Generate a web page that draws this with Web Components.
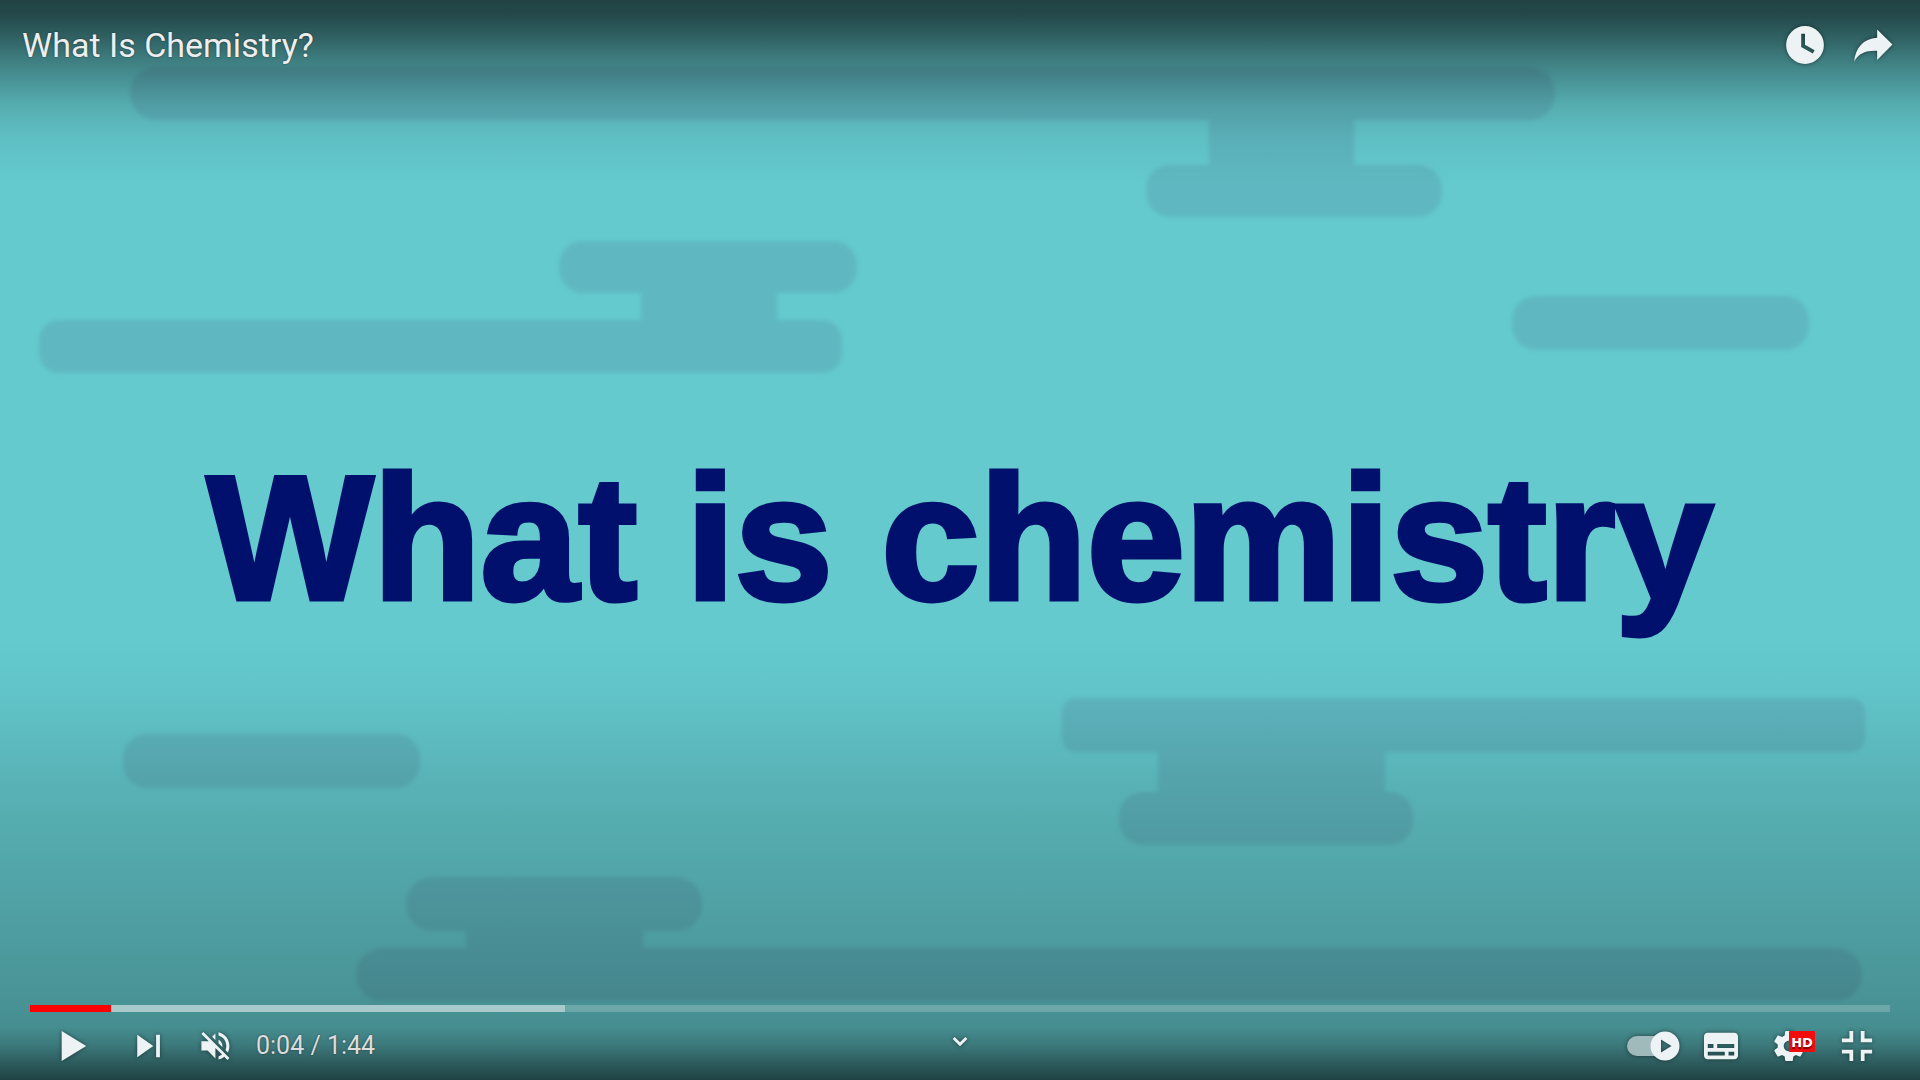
<!DOCTYPE html>
<html lang="en">
<head>
<meta charset="utf-8">
<title>What Is Chemistry?</title>
<style>
  body { margin: 0; font-family: Roboto, "Liberation Sans", sans-serif; background: #64cace; }
</style>
</head>
<body>
<video-player heading="What Is Chemistry?"></video-player>

<script>
const define = (name, html, setup) => {
  const template = document.createElement("template");
  template.innerHTML = html;
  customElements.define(name, class extends HTMLElement {
    connectedCallback() {
      if (this.shadowRoot) return;
      this.attachShadow({ mode: "open" }).append(template.content.cloneNode(true));
      if (setup) setup(this, this.shadowRoot);
    }
  });
};

const ICONS = {
  play: `<path d="M12 10V26L25 18z"/>`,
  next: `<path d="M12.300,24 20.8,18 12.3,12V24zM22.3,12v12h2V12h-2z"/>`,
  muted: `<path d="m21.48,17.98c0,-1.77-1.02,-3.29-2.5,-4.03v2.21l2.45,2.45c.03,-.2.05,-.41.05,-.63zm2.5,0c0,.94-.2,1.82-.54,2.64l1.51,1.51c.66,-1.24 1.03,-2.65 1.03,-4.15 0,-4.28-2.99,-7.86-7,-8.76v2.05c2.89,.86 5,3.54 5,6.71zM9.25,8.98l-1.27,1.26 4.72,4.73H7.98v6H11.98l5,5v-6.73l4.25,4.25c-.67,.52-1.42,.93-2.25,1.18v2.06c1.38,-.31 2.63,-.95 3.69,-1.81l2.04,2.05 1.27,-1.27-9,-9-7.72,-7.72zm7.72,.99-2.09,2.08 2.09,2.09V9.98z"/>`,
  captions: `<path fill-rule="evenodd" d="M11,11C9.89,11 9,11.9 9,13V23C9,24.1 9.89,25 11,25H25C26.1,25 27,24.1 27,23V13C27,11.9 26.1,11 25,11zM11,17H14V19H11zM20,23H11V21H20zM25,23H22V21H25zM25,19H16V17H25z"/>`,
  settings: `<path d="m23.94,18.78c.03,-.25.05,-.51.05,-.78 0,-.27-.02,-.52-.05,-.78l1.68,-1.32c.15,-.12.19,-.33.09,-.51l-1.6,-2.76c-.09,-.17-.31,-.24-.48,-.17l-1.99,.8c-.41,-.32-.86,-.58-1.35,-.78l-.3,-2.12c-.02,-.19-.19,-.33-.39,-.33h-3.2c-.2,0-.36,.14-.39,.33l-.3,2.12c-.48,.2-.93,.47-1.35,.78l-1.99,-.8c-.18,-.07-.39,0-.48,.17l-1.6,2.76c-.1,.17-.05,.39.09,.51l1.68,1.32c-.03,.25-.05,.52-.05,.78 0,.26.02,.52.05,.78l-1.68,1.32c-.15,.12-.19,.33-.09,.51l1.6,2.76c.09,.17.31,.24.48,.17l1.99,-.8c.41,.32.86,.58 1.35,.78l.3,2.12c.02,.19.19,.33.39,.33h3.2c.2,0 .36,-.14.39,-.33l.3,-2.12c.48,-.2.93,-.47 1.35,-.78l1.99,.8c.18,.07.39,0 .48,-.17l1.6,-2.76c.09,-.17.05,-.39-.09,-.51zm-5.94,2.01c-1.54,0-2.8,-1.25-2.8,-2.8 0,-1.54 1.25,-2.8 2.8,-2.8 1.54,0 2.8,1.25 2.8,2.8 0,1.54-1.25,2.8-2.8,2.8z"/>`,
  shrink: `<path d="M14,14h-4v2h6v-6h-2zM22,14v-4h-2v6h6v-2zM20,26h2v-4h4v-2h-6zM10,22h4v4h2v-6h-6z"/>`,
  later: `<path fill-rule="evenodd" d="M18,8a10,10 0 1 0 0,20a10,10 0 1 0 0,-20zM16,19.02V12H18V17.86L23.1,20.81 22.1,22.54z"/>`,
  share: `<path d="M20.2,9.8L28.3,17.7 20.2,25.9V21.1C14.6,20.8 10.6,22.2 8,26.7 8.7,19.6 12.8,14.5 20.2,14.1z"/>`,
  chevron: `<path d="M14.2,15.6L18,19.3 21.8,15.6" fill="none" stroke="currentColor" stroke-width="1.7"/>`
};

/* A drifting-cloud title card that fills the frame behind the controls. */
define("video-scene", `
<style>
  :host { display: block; }
  svg { display: block; width: 100%; height: 100%; }
</style>
<svg viewBox="0 0 1920 1080" preserveAspectRatio="none" aria-hidden="true">
  <defs>
    <linearGradient id="top" x1="0" y1="0" x2="0" y2="1">
      <stop offset="0" stop-opacity=".67"/><stop offset=".08" stop-opacity=".64"/>
      <stop offset=".2" stop-opacity=".52"/><stop offset=".33" stop-opacity=".37"/>
      <stop offset=".56" stop-opacity=".15"/><stop offset=".75" stop-opacity=".05"/>
      <stop offset="1" stop-opacity="0"/>
    </linearGradient>
    <linearGradient id="bottom" x1="0" y1="0" x2="0" y2="1">
      <stop offset="0" stop-opacity="0"/><stop offset=".12" stop-opacity=".03"/>
      <stop offset=".33" stop-opacity=".12"/><stop offset=".56" stop-opacity=".19"/>
      <stop offset=".78" stop-opacity=".26"/><stop offset=".88" stop-opacity=".3"/>
      <stop offset=".92" stop-opacity=".4"/><stop offset=".96" stop-opacity=".54"/>
      <stop offset="1" stop-opacity=".67"/>
    </linearGradient>
    <filter id="soft" x="-2%" y="-2%" width="104%" height="104%"><feGaussianBlur stdDeviation="2"/></filter>
  </defs>
  <rect width="1920" height="1080" fill="#64cace"/>
  <g fill="#5fb8c1" filter="url(#soft)">
    <rect x="130" y="67" width="1425" height="53" rx="26"/>
    <rect x="1209" y="110" width="145" height="65"/>
    <rect x="1146" y="165" width="296" height="52" rx="24"/>
    <rect x="559" y="241" width="298" height="52" rx="24"/>
    <rect x="641" y="285" width="136" height="45"/>
    <rect x="39" y="320" width="803" height="53" rx="20"/>
    <rect x="1512" y="296" width="297" height="54" rx="24"/>
    <rect x="1062" y="698" width="803" height="54" rx="14"/>
    <rect x="1158" y="745" width="227" height="60"/>
    <rect x="1119" y="792" width="294" height="53" rx="24"/>
    <rect x="123" y="734" width="297" height="54" rx="24"/>
    <rect x="406" y="877" width="296" height="54" rx="26"/>
    <rect x="466" y="920" width="177" height="40"/>
    <rect x="356" y="948" width="1506" height="53" rx="26"/>
  </g>
  <rect width="1920" height="186" fill="url(#top)"/>
  <rect y="640" width="1920" height="440" fill="url(#bottom)"/>
</svg>`);

define("icon-button", `
<style>
  :host { display: block; --size: 68px; }
  button { display: grid; place-items: center; position: relative; width: var(--size); height: var(--size);
    padding: 0; border: 0; background: none; color: #edf3f4; font: inherit; cursor: pointer; }
  svg { width: 100%; height: 100%; fill: currentColor; filter: drop-shadow(0 0 2px rgba(0,0,0,.5)); }
</style>
<button type="button"><svg viewBox="0 0 36 36" aria-hidden="true"></svg><slot></slot></button>`,
(host, root) => {
  root.querySelector("svg").innerHTML = ICONS[host.getAttribute("icon")];
  root.querySelector("button").setAttribute("aria-label", host.getAttribute("label"));
});

define("autoplay-switch", `
<style>
  :host { display: block; }
  label { display: grid; place-items: center; position: relative; width: 68px; height: 68px; cursor: pointer; }
  input { position: absolute; inset: 0; margin: 0; opacity: 0; }
  svg { width: 56px; height: 32px; filter: drop-shadow(0 0 2px rgba(0,0,0,.5)); }
</style>
<label><input type="checkbox" role="switch" checked aria-label="Autoplay">
  <svg viewBox="0 0 56 32" aria-hidden="true">
    <path d="M12 6H31a14.6 14.6 0 0 0 0 20H12a10 10 0 0 1 0-20z" fill="#a0b9bb"/>
    <path fill-rule="evenodd" fill="#edf3f4" d="M40 1.500a14.500 14.500 0 1 0 0 29a14.500 14.500 0 1 0 0-29zM36 9.500L46.500 16 36 22.500z"/>
  </svg>
</label>`);

define("quality-badge", `
<style>
  :host { position: absolute; left: 34px; top: 19px; width: 26px; height: 21px; border-radius: 1px;
    background: #f20d0d; color: #fff; font: bold 13px/23px "DejaVu Sans", sans-serif; text-align: center;
    text-shadow: 0 2px 1px rgba(0,0,0,.5); }
</style>
<slot></slot>`);

define("seek-bar", `
<style>
  :host { display: block; padding: 0 30px; }
  input { display: block; appearance: none; width: 100%; height: 7px; margin: 0; cursor: pointer;
    background: linear-gradient(90deg, #f00 var(--played), rgba(255,255,255,.52) var(--played) var(--loaded), rgba(255,255,255,.2) var(--loaded)); }
  input::-webkit-slider-thumb { appearance: none; width: 0; height: 0; }
</style>
<input type="range" min="0" max="104" value="4" aria-label="Seek">`,
(host, root) => {
  const input = root.querySelector("input");
  input.style.setProperty("--played", host.getAttribute("played"));
  input.style.setProperty("--loaded", host.getAttribute("loaded"));
});

define("control-bar", `
<style>
  :host { display: grid; grid-template-columns: 1fr auto 1fr; align-items: center; }
  .group { display: flex; align-items: center; }
  .start { gap: 7px; padding-left: 39px; }
  .end { justify-content: flex-end; padding-right: 29px; }
</style>
<div class="group start"><slot name="start"></slot></div>
<slot></slot>
<div class="group end"><slot name="end"></slot></div>`);

define("video-player", `
<style>
  :host { display: flex; flex-direction: column; position: relative; min-height: 100vh; overflow: hidden; }
  video-scene { position: absolute; inset: 0; z-index: -1; }
  header { display: flex; align-items: center; justify-content: space-between; height: 90px; padding: 0 13px 0 22px; }
  h1 { margin: 0; color: #eee; font-size: 34px; line-height: 40px; font-weight: 400; text-shadow: 0 0 2px rgba(0,0,0,.5); }
  nav { display: flex; }
  main { flex: 1; display: flex; align-items: center; justify-content: center; padding-bottom: 20px; }
  .card { margin: 0; color: #00106c; font: bold 176px/200px "Liberation Sans", Arial, sans-serif; white-space: nowrap;
    -webkit-text-stroke: 5px #00106c; }
  .muted { --size: 56px; }
  .more { align-self: start; --size: 60px; }
  time { margin-left: 4px; color: #ddd; font-size: 25px; line-height: 32px; text-shadow: 0 0 2px rgba(0,0,0,.5); }
</style>
<video-scene></video-scene>
<header>
  <h1></h1>
  <nav aria-label="Video actions">
    <icon-button icon="later" label="Watch later"></icon-button>
    <icon-button icon="share" label="Share"></icon-button>
  </nav>
</header>
<main><p class="card">What is chemistry</p></main>
<seek-bar played="4.350%" loaded="28.760%"></seek-bar>
<control-bar>
  <icon-button slot="start" icon="play" label="Play"></icon-button>
  <icon-button slot="start" icon="next" label="Next"></icon-button>
  <icon-button slot="start" class="muted" icon="muted" label="Unmute"></icon-button>
  <time slot="start">0:04 / 1:44</time>
  <icon-button class="more" icon="chevron" label="Scroll for details"></icon-button>
  <autoplay-switch slot="end"></autoplay-switch>
  <icon-button slot="end" icon="captions" label="Subtitles"></icon-button>
  <icon-button slot="end" icon="settings" label="Settings"><quality-badge>HD</quality-badge></icon-button>
  <icon-button slot="end" icon="shrink" label="Exit full screen"></icon-button>
</control-bar>`,
(host, root) => { root.querySelector("h1").textContent = host.getAttribute("heading"); });
</script>
</body>
</html>
